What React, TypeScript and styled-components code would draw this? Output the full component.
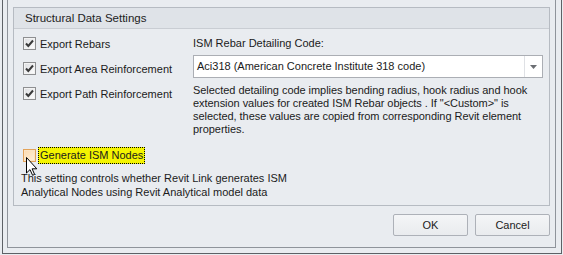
import styled, { createGlobalStyle } from "styled-components";

const GlobalStyle = createGlobalStyle`
  html, body {
    margin: 0;
    padding: 0;
    background: #e9ecf0;
  }
  body {
    font-family: "Liberation Sans", Arial, sans-serif;
    font-size: 11px;
    color: #1b1b1b;
  }
`;

const Window = styled.div`
  position: relative;
  box-sizing: border-box;
  width: 563px;
  height: 255px;
  padding: 0 1px 1px 2px;
  background: #e9ecf0;
  overflow: hidden;
`;

const Frame = styled.div`
  box-sizing: border-box;
  height: 100%;
  border: 1px solid #5d6166;
  border-top: none;
  padding: 0 5px 5px 4px;
`;

const Panel = styled.div`
  box-sizing: border-box;
  height: 100%;
  border: 1px solid #8f949b;
  border-top: none;
  padding: 7px 5px 0 5px;
  display: flex;
  flex-direction: column;
`;

const Group = styled.div`
  border: 1px solid #b6bbc2;
  background: #e9ecf0;
`;

const GroupHeader = styled.div`
  height: 20px;
  line-height: 20px;
  padding-left: 11px;
  background: #dfe3e8;
  border-bottom: 1px solid #c9cdd3;
  font-size: 11.5px;
  color: #222;
`;

const GroupBody = styled.div`
  padding: 2px 6px 6px 7px;
`;

const Columns = styled.div`
  display: grid;
  grid-template-columns: 172px 1fr;
`;

const LeftColumn = styled.div`
  display: flex;
  flex-direction: column;
  padding-left: 2px;
`;

const RightColumn = styled.div`
  display: flex;
  flex-direction: column;
`;

const Row = styled.div`
  height: 25px;
  display: flex;
  align-items: center;
`;

const Box = styled.span<{ $hover?: boolean }>`
  box-sizing: border-box;
  width: 13px;
  height: 13px;
  flex: none;
  display: flex;
  align-items: center;
  justify-content: center;
  border: 1px solid ${(p) => (p.$hover ? "#e3a35a" : "#8e8f91")};
  background: ${(p) =>
    p.$hover
      ? "linear-gradient(135deg, #fbd9ae, #fff1dc)"
      : "linear-gradient(135deg, #dcdde0, #ffffff)"};
  box-shadow: inset 0 0 0 1px ${(p) => (p.$hover ? "#fbe3c4" : "#f3f3f3")};
`;

const Label = styled.span`
  margin-left: 4px;
  white-space: nowrap;
`;

const FocusLabel = styled.span`
  margin-left: 2px;
  padding: 1px;
  line-height: 13px;
  border: 1px dotted #000;
  background: #f4f400;
  white-space: nowrap;
`;

const FieldLabel = styled.div`
  height: 24px;
  line-height: 25px;
  white-space: nowrap;
`;

const Combo = styled.div`
  box-sizing: border-box;
  height: 23px;
  display: flex;
  border: 1px solid #abaeb4;
  background: #fff;
`;

const ComboText = styled.div`
  flex: 1;
  padding-left: 3px;
  line-height: 21px;
  white-space: nowrap;
`;

const ComboButton = styled.div`
  width: 17px;
  border-left: 1px solid #dfe1e5;
  display: flex;
  align-items: center;
  justify-content: center;
`;

const Help = styled.div`
  margin-top: 6px;
  line-height: 13px;
  white-space: nowrap;
  letter-spacing: -0.05px;
`;

const GenerateRow = styled.div`
  margin-top: 10px;
  height: 18px;
  display: flex;
  align-items: center;
  padding-left: 2px;
`;

const NodesHelp = styled.div`
  margin-top: 7px;
  line-height: 14px;
  white-space: nowrap;
`;

const Footer = styled.div`
  display: flex;
  justify-content: flex-end;
  gap: 7px;
  padding-top: 8px;
`;

const Button = styled.button`
  box-sizing: border-box;
  width: 75px;
  height: 22px;
  border: 1px solid #adb1b8;
  border-radius: 2px;
  background: linear-gradient(#f4f5f7, #e9ebee);
  font-family: "Liberation Sans", Arial, sans-serif;
  font-size: 11px;
  color: #1b1b1b;
  padding: 0;
`;

const Cursor = styled.svg`
  position: absolute;
  left: 26px;
  top: 157px;
`;

const Check = () => (
  <svg width="9" height="9" viewBox="0 0 9 9">
    <path d="M1 4.5 L3.3 7 L8 1.5" fill="none" stroke="#3a3a3a" strokeWidth="2" />
  </svg>
);

const Arrow = () => (
  <svg width="7" height="4" viewBox="0 0 7 4">
    <path d="M0 0 H7 L3.5 4 Z" fill="#6b6e73" />
  </svg>
);

const exportOptions = ["Export Rebars", "Export Area Reinforcement", "Export Path Reinforcement"];

export default function App() {
  return (
    <>
      <GlobalStyle />
      <Window>
        <Frame>
          <Panel>
            <Group>
              <GroupHeader>Structural Data Settings</GroupHeader>
              <GroupBody>
                <Columns>
                  <LeftColumn>
                    {exportOptions.map((o) => (
                      <Row key={o}>
                        <Box>
                          <Check />
                        </Box>
                        <Label>{o}</Label>
                      </Row>
                    ))}
                  </LeftColumn>
                  <RightColumn>
                    <FieldLabel>ISM Rebar Detailing Code:</FieldLabel>
                    <Combo>
                      <ComboText>Aci318 (American Concrete Institute 318 code)</ComboText>
                      <ComboButton>
                        <Arrow />
                      </ComboButton>
                    </Combo>
                    <Help>
                      Selected detailing code implies bending radius, hook radius and hook
                      <br />
                      extension values for created ISM Rebar objects . If "&lt;Custom&gt;" is
                      <br />
                      selected, these values are copied from corresponding Revit element
                      <br />
                      properties.
                    </Help>
                  </RightColumn>
                </Columns>
                <GenerateRow>
                  <Box $hover />
                  <FocusLabel>Generate ISM Nodes</FocusLabel>
                </GenerateRow>
                <NodesHelp>
                  This setting controls whether Revit Link generates ISM
                  <br />
                  Analytical Nodes using Revit Analytical model data
                </NodesHelp>
              </GroupBody>
            </Group>
            <Footer>
              <Button>OK</Button>
              <Button>Cancel</Button>
            </Footer>
          </Panel>
        </Frame>
        <Cursor width="12" height="19" viewBox="0 0 12 19">
          <path
            d="M0.5 0.5 L0.5 16 L4 12.6 L6.6 18.3 L8.6 17.4 L6.1 11.8 L10.8 11.8 Z"
            fill="#fff"
            stroke="#000"
            strokeWidth="1"
          />
        </Cursor>
      </Window>
    </>
  );
}
